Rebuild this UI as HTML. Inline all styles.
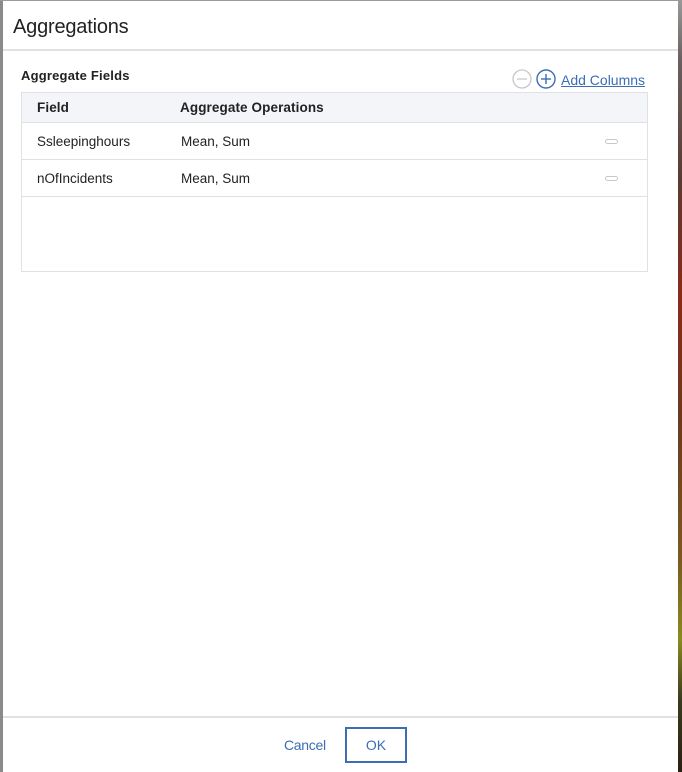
<!DOCTYPE html>
<html><head><meta charset="utf-8"><style>
*{margin:0;padding:0;box-sizing:border-box}
html,body{width:682px;height:772px;overflow:hidden;font-family:"Liberation Sans",sans-serif;background:#fff}
.left{position:absolute;left:0;top:0;width:3px;height:772px;background:#8a8a8a}
.right{position:absolute;left:678px;top:0;width:4px;height:772px;background:linear-gradient(#9a9a9a 0,#6a6060 60px,#5a3a30 180px,#8a2a1a 300px,#6a3a20 420px,#7a5a20 560px,#8a8a20 640px,#3a3a20 700px,#2a2010 772px)}
.top{position:absolute;left:0;top:0;width:682px;height:1px;background:#9a9a9a}
.dlg{position:absolute;left:3px;top:1px;width:675px;height:771px;background:#fff}
.title{position:absolute;left:10px;top:15px;font-size:20px;color:#222;letter-spacing:-0.2px}
.hdiv{position:absolute;left:0;top:48px;width:675px;height:2px;background:#dfe1e5}
.sec{position:absolute;left:18px;top:67px;font-size:13px;font-weight:bold;color:#222;letter-spacing:0.2px}
.icons{position:absolute;left:509px;top:68px}
.add{position:absolute;left:558px;top:71px;font-size:14px;color:#3b6eb4;text-decoration:underline;letter-spacing:0}
.tbl{position:absolute;left:18px;top:91px;width:627px;height:180px;border:1px solid #dfe1e5}
.th{position:absolute;left:0;top:0;width:625px;height:30px;background:#f4f5f9;border-bottom:1px solid #dfe1e5}
.row{position:absolute;left:0;width:625px;height:37px;border-bottom:1px solid #dfe1e5}
.c{position:absolute;font-size:13.5px;color:#222;letter-spacing:0}
.hb{font-weight:bold;font-size:13.5px;letter-spacing:0.1px}
.dash{position:absolute;left:583px;top:16px;width:13px;height:5px;border:1px solid #c8c8c8;border-radius:3px}
.fdiv{position:absolute;left:0;top:715px;width:675px;height:2px;background:#dfe1e5}
.cancel{position:absolute;left:281px;top:736px;font-size:14px;color:#3b6eb4;letter-spacing:-0.3px}
.ok{position:absolute;left:342px;top:726px;width:62px;height:36px;border:2px solid #3b6eb4;color:#3b6eb4;font-size:14px;text-align:center;line-height:32px}
</style></head><body>
<div class="left"></div><div class="top"></div><div class="right"></div>
<div class="dlg">
<div class="title">Aggregations</div>
<div class="hdiv"></div>
<div class="sec">Aggregate Fields</div>
<svg class="icons" width="48" height="22" viewBox="0 0 48 22">
<circle cx="10" cy="10" r="9" fill="none" stroke="#c8c8c8" stroke-width="1.3"/>
<line x1="5" y1="10" x2="15" y2="10" stroke="#c8c8c8" stroke-width="1.3"/>
<circle cx="34" cy="10" r="9" fill="none" stroke="#3b6eb4" stroke-width="1.4"/>
<line x1="29" y1="10" x2="39" y2="10" stroke="#3b6eb4" stroke-width="1.4"/>
<line x1="34" y1="5" x2="34" y2="15" stroke="#3b6eb4" stroke-width="1.4"/>
</svg>
<div class="add">Add Columns</div>
<div class="tbl">
<div class="th"><div class="c hb" style="left:15px;top:7px">Field</div><div class="c hb" style="left:158px;top:7px">Aggregate Operations</div></div>
<div class="row" style="top:30px"><div class="c" style="left:15px;top:11px">Ssleepinghours</div><div class="c" style="left:159px;top:11px">Mean, Sum</div><div class="dash"></div></div>
<div class="row" style="top:67px"><div class="c" style="left:15px;top:11px">nOfIncidents</div><div class="c" style="left:159px;top:11px">Mean, Sum</div><div class="dash"></div></div>
</div>
<div class="fdiv"></div>
<div class="cancel">Cancel</div>
<div class="ok">OK</div>
</div>
</body></html>
